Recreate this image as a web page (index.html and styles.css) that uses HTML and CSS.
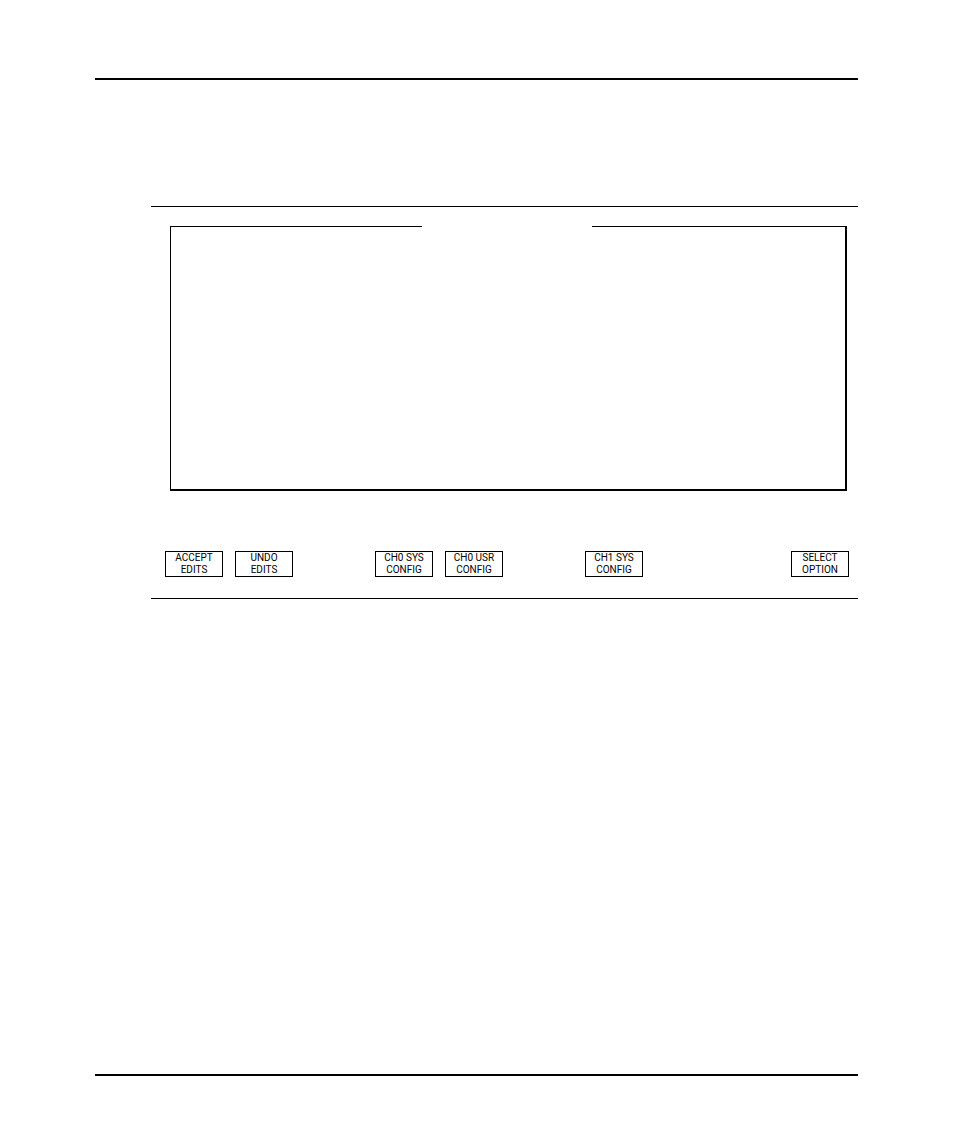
FILE: index.html
```html
<!DOCTYPE html>
<html lang="en">
<head>
    <meta charset="UTF-8">
    <meta name="viewport" content="width=device-width, initial-scale=1.0">
    <title>Channel Configuration</title>
    <link rel="stylesheet" href="styles.css">
</head>
<body>
    <main class="page">
        <section class="screen">
            <fieldset class="panel">
                <legend></legend>
            </fieldset>
            <div class="keys">
                <div class="key-group">
                    <button type="button">ACCEPT<br>EDITS</button>
                    <button type="button">UNDO<br>EDITS</button>
                </div>
                <div class="key-group">
                    <button type="button">CH0 SYS<br>CONFIG</button>
                    <button type="button">CH0 USR<br>CONFIG</button>
                </div>
                <div class="key-group">
                    <button type="button">CH1 SYS<br>CONFIG</button>
                </div>
                <div class="key-group">
                    <button type="button">SELECT<br>OPTION</button>
                </div>
            </div>
        </section>
    </main>
</body>
</html>
```

FILE: styles.css
```css
* {
    box-sizing: border-box;
}
body {
    margin: 0;
    padding: 78px 96px 69px 95px;
    min-height: 100vh;
    display: flex;
    background-color: #fff;
    color: #000;
    font-family: Roboto, "Liberation Sans", Arial, sans-serif;
}
.page {
    flex: 1;
    padding: 126px 0 0 56px;
    border-top: 2px solid #000;
    border-bottom: 2px solid #000;
}
.screen {
    padding: 19px 8px 21px 14px;
    border-top: 1px solid #000;
    border-bottom: 1px solid #000;
}
.panel {
    height: 265px;
    margin: 0 3px 60px 5px;
    padding: 0 2px 0 0;
    border: 1px solid #000;
    border-right-width: 2px;
    border-bottom-width: 2px;
}
/* opening in the top edge of the panel */
.panel legend {
    width: 170px;
    height: 1px;
    margin: 0 auto;
    padding: 0;
}
.keys {
    display: grid;
    grid-template-columns: 210fr 210fr 206fr 59fr;
}
.key-group {
    display: flex;
    gap: 12px;
}
.key-group button {
    width: 58px;
    height: 26px;
    padding: 0;
    background: none;
    border: 1px solid #000;
    border-radius: 0;
    color: #000;
    font-family: inherit;
    font-size: 10px;
    line-height: 12px;
    white-space: nowrap;
    cursor: pointer;
}
.key-group button:hover {
    background-color: #eee;
}
```
